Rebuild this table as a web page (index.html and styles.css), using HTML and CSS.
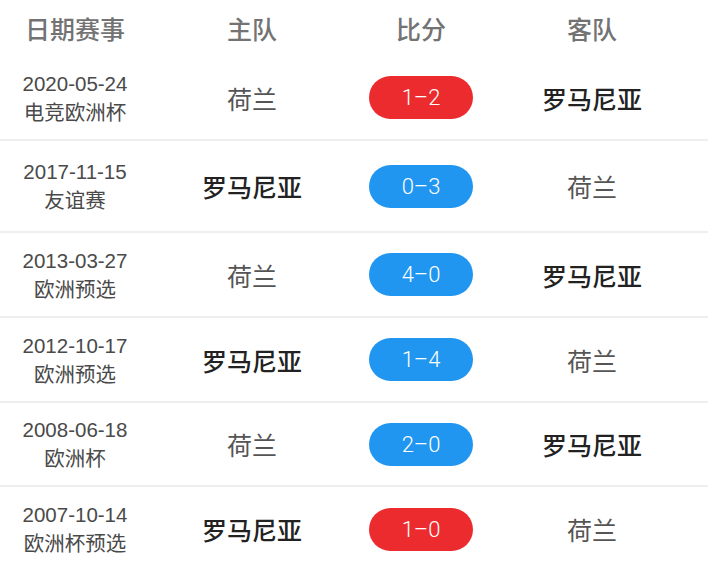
FILE: index.html
```html
<!DOCTYPE html>
<html lang="zh">
<head>
<meta charset="utf-8">
<link rel="stylesheet" href="styles.css">
</head>
<body>
<div class="table">
  <div class="row head">
    <div class="cell">日期赛事</div>
    <div class="cell">主队</div>
    <div class="cell">比分</div>
    <div class="cell">客队</div>
  </div>
  <div class="row">
    <div class="cell date"><span>2020-05-24</span><span>电竞欧洲杯</span></div>
    <div class="cell team">荷兰</div>
    <div class="cell"><span class="pill red">1–2</span></div>
    <div class="cell team win">罗马尼亚</div>
  </div>
  <div class="row tall">
    <div class="cell date"><span>2017-11-15</span><span>友谊赛</span></div>
    <div class="cell team win">罗马尼亚</div>
    <div class="cell"><span class="pill blue">0–3</span></div>
    <div class="cell team">荷兰</div>
  </div>
  <div class="row">
    <div class="cell date"><span>2013-03-27</span><span>欧洲预选</span></div>
    <div class="cell team">荷兰</div>
    <div class="cell"><span class="pill blue">4–0</span></div>
    <div class="cell team win">罗马尼亚</div>
  </div>
  <div class="row">
    <div class="cell date"><span>2012-10-17</span><span>欧洲预选</span></div>
    <div class="cell team win">罗马尼亚</div>
    <div class="cell"><span class="pill blue">1–4</span></div>
    <div class="cell team">荷兰</div>
  </div>
  <div class="row short">
    <div class="cell date"><span>2008-06-18</span><span>欧洲杯</span></div>
    <div class="cell team">荷兰</div>
    <div class="cell"><span class="pill blue">2–0</span></div>
    <div class="cell team win">罗马尼亚</div>
  </div>
  <div class="row short last">
    <div class="cell date"><span>2007-10-14</span><span>欧洲杯预选</span></div>
    <div class="cell team win">罗马尼亚</div>
    <div class="cell"><span class="pill red">1–0</span></div>
    <div class="cell team">荷兰</div>
  </div>
</div>
</body>
</html>
```
FILE: styles.css
```css
html, body {
  margin: 0;
  padding: 0;
  background: #ffffff;
}
body {
  font-family: "Liberation Sans", "Noto Sans CJK SC", sans-serif;
  width: 708px;
  height: 571px;
  overflow: hidden;
}
.table {
  display: flex;
  flex-direction: column;
}
.row {
  display: grid;
  grid-template-columns: 150px 204px 134px 208px;
  height: 85px;
  box-sizing: border-box;
  border-bottom: 2px solid #eeeeee;
}
.row.tall { height: 92px; }
.row.short { height: 84px; }
.row.last { border-bottom: none; }
.row.head {
  height: 56px;
  border-bottom: none;
  color: #737373;
  font-size: 25px;
  font-weight: 500;
}
.cell {
  display: flex;
  align-items: center;
  justify-content: center;
}
.date {
  flex-direction: column;
  color: #4a4a4a;
  font-size: 20.5px;
  line-height: 29px;
}
.team {
  font-size: 25px;
  color: #555555;
}
.team.win {
  color: #222222;
  font-weight: 500;
}
.pill {
  width: 104px;
  height: 43px;
  border-radius: 22px;
  display: flex;
  align-items: center;
  justify-content: center;
  color: #ffffff;
  font-family: "Roboto", "Liberation Sans", sans-serif;
  font-weight: 300;
  font-size: 22px;
}
.pill.red { background: #ec2b2e; }
.pill.blue { background: #2196f0; }
```
